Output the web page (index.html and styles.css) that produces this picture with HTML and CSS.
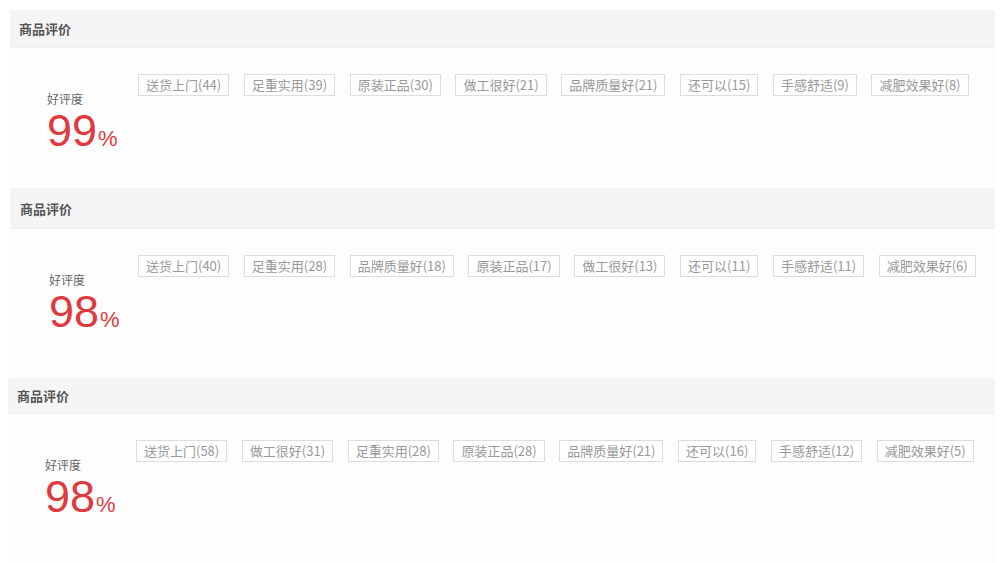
FILE: index.html
```html
<!DOCTYPE html>
<html>
<head>
	<meta charset="UTF-8">
	<title>商品评价</title>
	<link rel="stylesheet" href="styles.css">
</head>
<body>

<div class="comment s1">
	<div class="comment-hd">商品评价</div>
	<div class="comment-bd">
		<div class="rate">
			<div class="rate-label">好评度</div>
			<div class="rate-num">99<span>%</span></div>
		</div>
		<ul class="tags">
			<li>送货上门(44)</li>
			<li>足重实用(39)</li>
			<li>原装正品(30)</li>
			<li>做工很好(21)</li>
			<li>品牌质量好(21)</li>
			<li>还可以(15)</li>
			<li>手感舒适(9)</li>
			<li>减肥效果好(8)</li>
		</ul>
	</div>
</div>

<div class="comment s2">
	<div class="comment-hd">商品评价</div>
	<div class="comment-bd">
		<div class="rate">
			<div class="rate-label">好评度</div>
			<div class="rate-num">98<span>%</span></div>
		</div>
		<ul class="tags">
			<li>送货上门(40)</li>
			<li>足重实用(28)</li>
			<li>品牌质量好(18)</li>
			<li>原装正品(17)</li>
			<li>做工很好(13)</li>
			<li>还可以(11)</li>
			<li>手感舒适(11)</li>
			<li>减肥效果好(6)</li>
		</ul>
	</div>
</div>

<div class="comment s3">
	<div class="comment-hd">商品评价</div>
	<div class="comment-bd">
		<div class="rate">
			<div class="rate-label">好评度</div>
			<div class="rate-num">98<span>%</span></div>
		</div>
		<ul class="tags">
			<li>送货上门(58)</li>
			<li>做工很好(31)</li>
			<li>足重实用(28)</li>
			<li>原装正品(28)</li>
			<li>品牌质量好(21)</li>
			<li>还可以(16)</li>
			<li>手感舒适(12)</li>
			<li>减肥效果好(5)</li>
		</ul>
	</div>
</div>

</body>
</html>
```

FILE: styles.css
```css
*{ margin: 0; padding: 0; box-sizing: border-box;}
li{ list-style: none;}
body{ background: #fff; font-family: "Microsoft YaHei", "Noto Sans CJK SC", sans-serif; color: #666; overflow: hidden;}

.comment{ width: 985px; background: #fdfdfd;}
.comment-hd{ height: 38px; line-height: 38px; padding-left: 9px; background: #f5f5f5; border-bottom: 1px solid #efefef; font-size: 13px; font-weight: bold; color: #555;}
.comment-bd{ display: flex; border-bottom: 1px solid #f2f2f2;}

/* 三块截图位置略有偏差 */
.s1{ margin: 10px 0 0 10px;}
.s1 .comment-bd{ height: 141px;}
.s2{ margin: 0 0 0 10px;}
.s2 .comment-hd{ height: 40px; line-height: 40px; padding-left: 10px;}
.s2 .comment-bd{ height: 149px; border-bottom: none;}
.s3{ margin: 0 0 0 8px; width: 987px;}
.s3 .comment-hd{ height: 36px; line-height: 36px; padding-left: 9px;}
.s3 .comment-bd{ height: 150px; border-bottom: none;}

.rate{ width: 128px; padding: 43px 0 0 37px;}
.s2 .rate{ padding-left: 39px;}
.s3 .rate{ padding-left: 37px; padding-top: 43px;}
.rate-label{ font-size: 12px; line-height: 16px; color: #666;}
.rate-num{ font-family: "Liberation Sans", Arial, sans-serif; font-size: 45px; line-height: 44px; color: #df3a3d; margin-top: 2px;}
.rate-num span{ font-size: 22px; margin-left: 1px;}

.tags{ display: flex; flex-wrap: wrap; gap: 14.6px; padding-top: 26px; align-self: flex-start;}
.tags li{ height: 22px; line-height: 20px; padding: 0 7px; border: 1px solid #ddd; background: #fff; font-size: 13px; color: #999; white-space: nowrap;}
```
